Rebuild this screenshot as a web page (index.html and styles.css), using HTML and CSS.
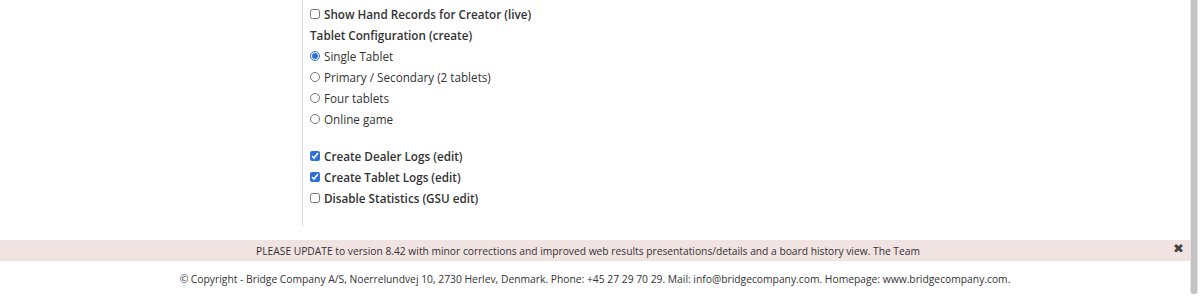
FILE: index.html
```html
<!doctype html>
<html lang="en">
<head>
    <meta charset="UTF-8">
    <title>Settings</title>
    <link rel="stylesheet" href="styles.css">
</head>
<body>

<div class="page">
    <div class="main">
        <div class="side"></div>
        <div class="settings">
            <label class="row bold"><input type="checkbox"> Show Hand Records for Creator (live)</label>
            <div class="row bold">Tablet Configuration (create)</div>
            <label class="row"><input type="radio" name="tablet" checked> Single Tablet</label>
            <label class="row"><input type="radio" name="tablet"> Primary / Secondary (2 tablets)</label>
            <label class="row"><input type="radio" name="tablet"> Four tablets</label>
            <label class="row"><input type="radio" name="tablet"> Online game</label>

            <div class="spacer"></div>

            <label class="row bold"><input type="checkbox" checked> Create Dealer Logs (edit)</label>
            <label class="row bold"><input type="checkbox" checked> Create Tablet Logs (edit)</label>
            <label class="row bold"><input type="checkbox"> Disable Statistics (GSU edit)</label>
        </div>
    </div>

    <div class="notice">
        <span>PLEASE UPDATE to version 8.42 with minor corrections and improved web results presentations/details and a board history view. The Team</span>
        <span class="close">&#10006;</span>
    </div>

    <div class="footer">
        &copy; Copyright - Bridge Company A/S, Noerrelundvej 10, 2730 Herlev, Denmark. Phone: +45 27 29 70 29. Mail: info@bridgecompany.com. Homepage: www.bridgecompany.com.
    </div>
</div>

<div class="scrollbar"></div>

</body>
</html>
```

FILE: styles.css
```css
body {
    margin: 0;
    font-family: "Open Sans", sans-serif;
    color: #333;
    background: #fff;
    overflow: hidden;
}

.page {
    width: 1190px;
}

.main {
    display: flex;
    height: 226px;
}

.side {
    width: 302px;
    border-right: 1px solid #dcdcdc;
}

.settings {
    display: flex;
    flex-direction: column;
    padding: 3px 0 0 7px;
    font-size: 11.7px;
}

.row {
    display: flex;
    align-items: center;
    height: 21px;
}

.bold {
    font-weight: 600;
}

.row input {
    width: 10px;
    height: 10px;
    margin: 0 4px 0 0;
    accent-color: #2c6fd8;
}

.spacer {
    height: 16px;
}

.notice {
    margin-top: 14px;
    height: 21px;
    background: #f2e3e3;
    display: flex;
    align-items: center;
    justify-content: center;
    position: relative;
    font-size: 10.25px;
    padding-right: 14px;
}

.close {
    position: absolute;
    right: 6px;
    top: -1px;
    font-size: 13px;
    color: #444;
}

.footer {
    text-align: center;
    font-size: 10.3px;
    padding-top: 11px;
}

.scrollbar {
    position: fixed;
    top: 0;
    right: 2px;
    width: 6px;
    height: 294px;
    background: #c4c4c4;
    border-left: 1px solid #e4e4e4;
    border-right: 1px solid #e4e4e4;
    border-radius: 0 0 3px 3px;
}
```
